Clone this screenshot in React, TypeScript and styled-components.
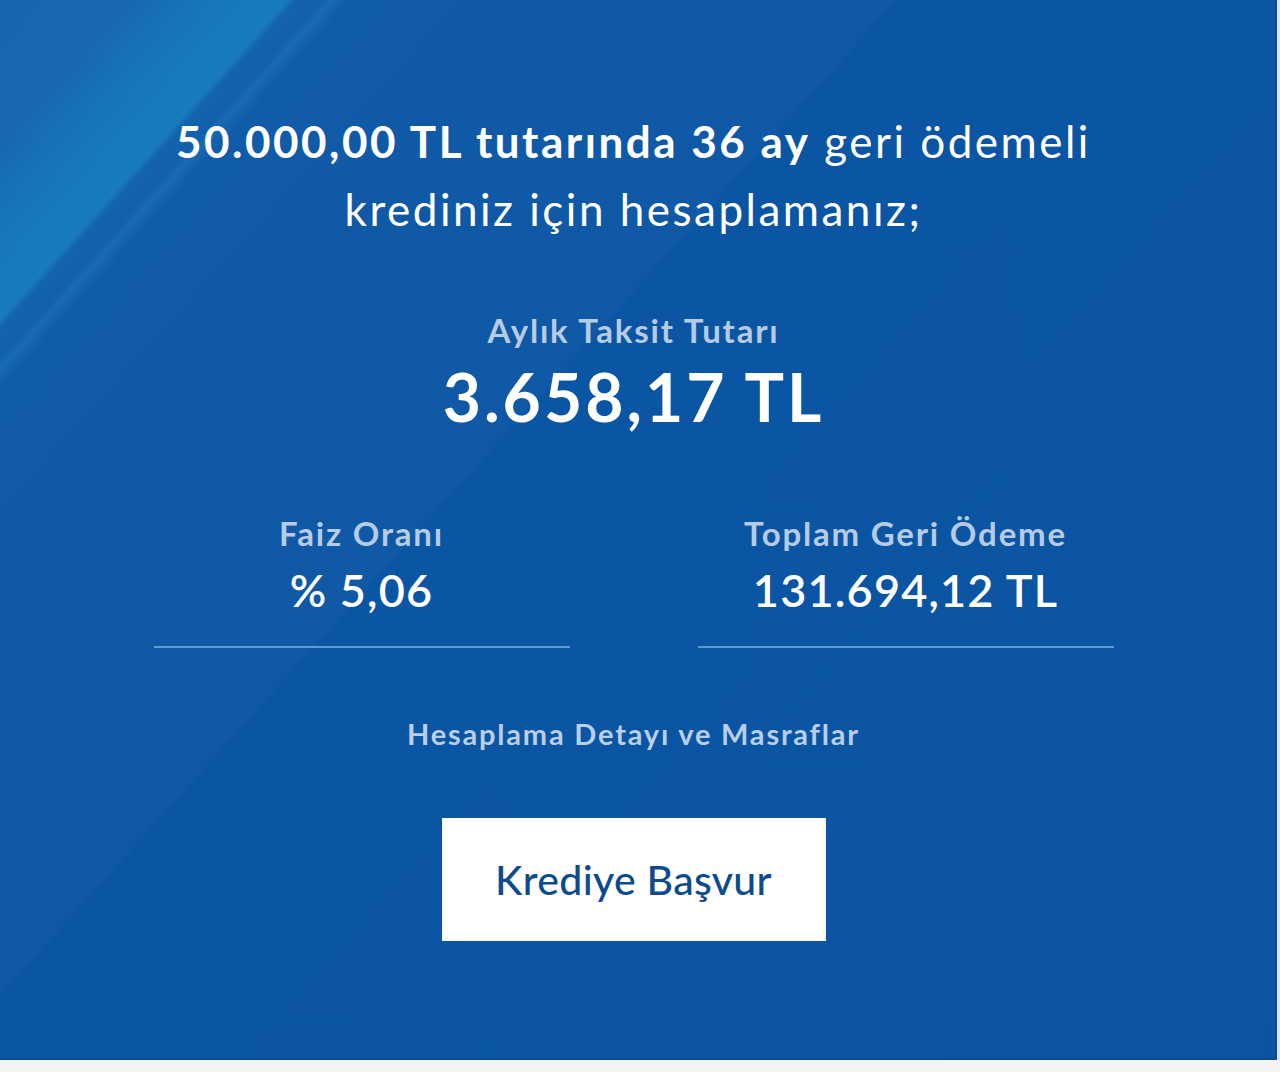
import React from "react";
import styled, { createGlobalStyle } from "styled-components";

const GlobalStyle = createGlobalStyle`
  html, body {
    margin: 0;
    padding: 0;
    background: #f1f3f5;
  }
  body {
    font-family: Lato, "Liberation Sans", sans-serif;
    -webkit-font-smoothing: antialiased;
  }
`;

// result panel with the diagonal light streaks in the upper left corner
const Panel = styled.section`
  box-sizing: border-box;
  width: 1277px;
  height: 1060px;
  padding: 107px 8px 0 0;
  display: flex;
  flex-direction: column;
  align-items: center;
  color: #fff;
  border-right: 2px solid #0a4b93;
  border-bottom: 2px solid #0a4b93;
  box-shadow: 3px 0 0 #d6e5f3;
  background:
    linear-gradient(
      132deg,
      rgba(255, 255, 255, 0.018) 0%,
      rgba(255, 255, 255, 0.018) 40%,
      rgba(255, 255, 255, 0) 40.4%
    ),
    linear-gradient(
      132deg,
      #1462ac 0%,
      #1465ae 6%,
      #126fb3 8%,
      #1277b8 11%,
      #1379b9 12.9%,
      #0f60ab 13.3%,
      #0e5daa 14.5%,
      #1467b1 14.9%,
      #0c59a6 15.7%,
      #0b56a4 24%,
      #0a54a2 100%
    );
`;

const Summary = styled.h2`
  margin: 0;
  font-size: 44px;
  line-height: 68px;
  letter-spacing: 2.5px;
  font-weight: 400;
  text-align: center;

  strong {
    font-weight: 700;
  }
`;

const Caption = styled.div<{ $size: number; $top: number; $spacing: number }>`
  margin-top: ${(p) => p.$top}px;
  font-size: ${(p) => p.$size}px;
  letter-spacing: ${(p) => p.$spacing}px;
  line-height: 1;
  font-weight: 700;
  color: #b6cbe4;
  text-align: center;
  white-space: nowrap;
`;

const Amount = styled.div<{ $size: number; $top: number; $spacing: number; $weight: number }>`
  margin-top: ${(p) => p.$top}px;
  font-size: ${(p) => p.$size}px;
  letter-spacing: ${(p) => p.$spacing}px;
  font-weight: ${(p) => p.$weight};
  line-height: 1;
  color: #fff;
  text-align: center;
  white-space: nowrap;
`;

const Stats = styled.div`
  display: grid;
  grid-template-columns: repeat(2, 416px);
  column-gap: 128px;
  margin-top: 87px;
`;

const Stat = styled.div`
  display: flex;
  flex-direction: column;
  align-items: center;
  padding-bottom: 33px;
  border-bottom: 2px solid #5d9bd7;
`;

const DetailsLink = styled.a`
  margin-top: 71px;
  font-size: 29px;
  letter-spacing: 1.8px;
  line-height: 1;
  font-weight: 700;
  color: #b9cee8;
  text-decoration: none;
  cursor: pointer;
`;

const ApplyButton = styled.button`
  margin-top: 70px;
  width: 384px;
  height: 123px;
  border: 0;
  border-radius: 0;
  background: #fff;
  color: #0d4b8c;
  font-family: Lato, "Liberation Sans", sans-serif;
  font-size: 41px;
  font-weight: 500;
  letter-spacing: 0.3px;
  cursor: pointer;
`;

const stats = [
  { label: "Faiz Oranı", value: "% 5,06" },
  { label: "Toplam Geri Ödeme", value: "131.694,12 TL" },
];

export default function App() {
  return (
    <>
      <GlobalStyle />
      <Panel>
        <Summary>
          <strong>50.000,00 TL tutarında 36 ay</strong> geri ödemeli
          <br />
          krediniz için hesaplamanız;
        </Summary>

        <Caption $size={33} $top={71} $spacing={1.8}>
          Aylık Taksit Tutarı
        </Caption>
        <Amount $size={66} $top={17} $spacing={3} $weight={700}>
          3.658,17 TL
        </Amount>

        <Stats>
          {stats.map((s) => (
            <Stat key={s.label}>
              <Caption $size={33} $top={0} $spacing={1.8}>
                {s.label}
              </Caption>
              <Amount $size={45} $top={18} $spacing={1.2} $weight={600}>
                {s.value}
              </Amount>
            </Stat>
          ))}
        </Stats>

        <DetailsLink>Hesaplama Detayı ve Masraflar</DetailsLink>
        <ApplyButton>Krediye Başvur</ApplyButton>
      </Panel>
    </>
  );
}
